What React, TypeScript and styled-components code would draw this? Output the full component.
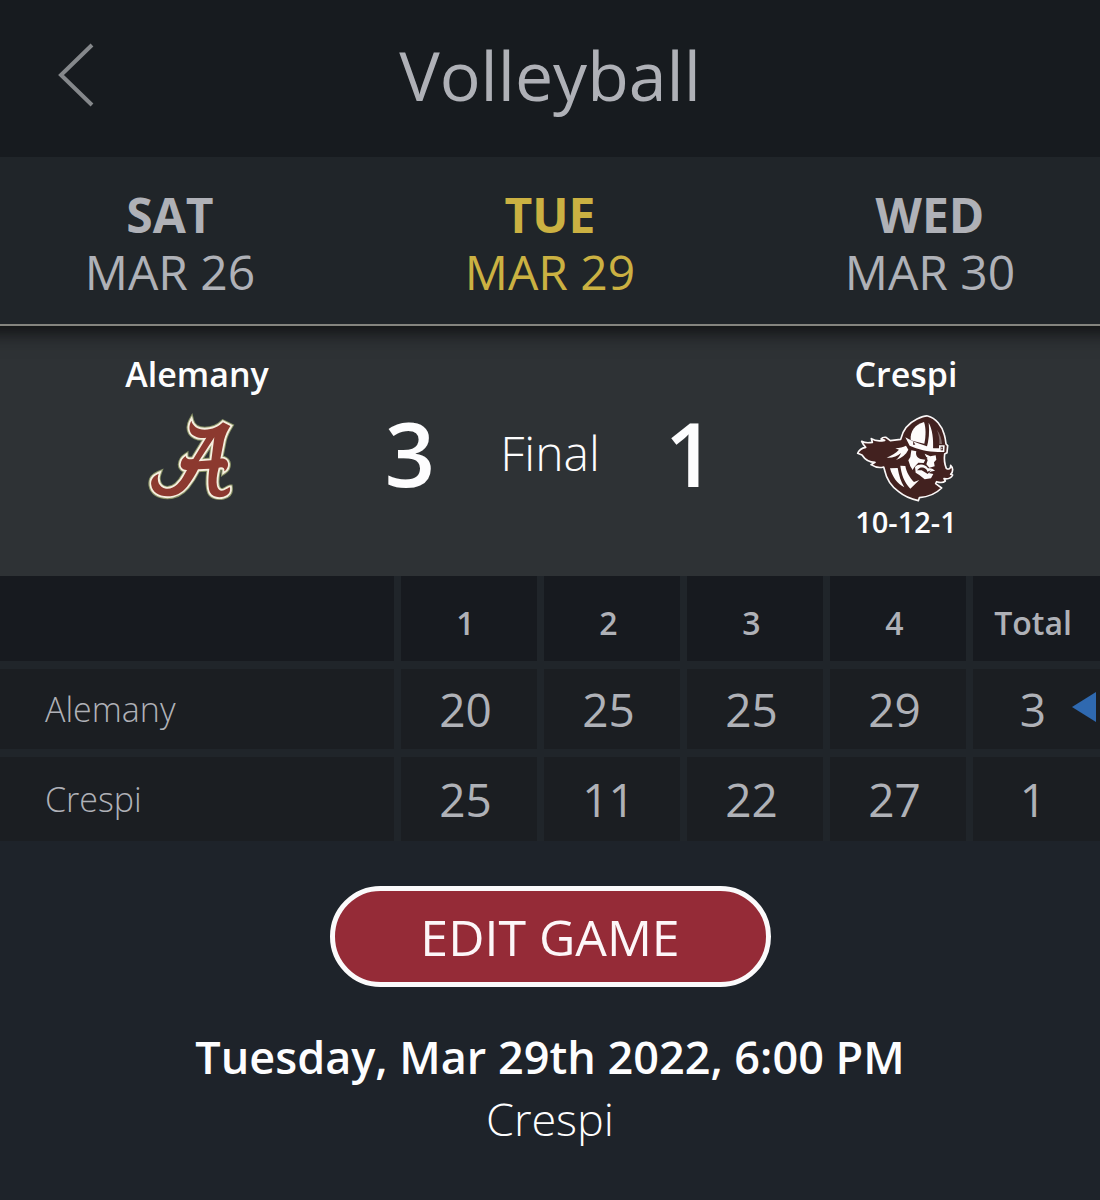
import React from 'react';
import styled, { createGlobalStyle } from 'styled-components';

const GlobalStyle = createGlobalStyle`
  *, *::before, *::after { box-sizing: border-box; }
  body {
    margin: 0;
    background: #1e232a;
    color: #fdfdfe;
    font-family: 'Open Sans', 'Noto Sans', sans-serif;
  }
`;

const Page = styled.div`
  min-height: 100vh;
  overflow-x: hidden;
`;

const Header = styled.header`
  display: grid;
  grid-template-columns: 152px 1fr 152px;
  align-items: center;
  position: relative;
  z-index: 1;
  height: 157px;
  padding-bottom: 7px;
  background: #171b1f;
`;

const BackButton = styled.button`
  display: flex;
  align-items: center;
  justify-content: center;
  height: 100px;
  padding: 0;
  border: 0;
  background: none;
  color: #85888b;
  cursor: pointer;
`;

const Title = styled.h1`
  margin: 0;
  color: #afb1b7;
  font-size: 68px;
  font-weight: 400;
  line-height: 100px;
  text-align: center;
`;

const DateTabs = styled.nav`
  display: grid;
  grid-template-columns: repeat(3, 1fr);
  position: relative;
  padding: 29px 0 24px;
  margin: 0 -20px;
  border-bottom: 2px solid #84847e;
  background: #202529;
  box-shadow: 0 4px 18px 2px #0e0f10;
`;

const DateTab = styled.button<{ $active: boolean }>`
  display: flex;
  flex-direction: column;
  align-items: center;
  padding: 0;
  border: 0;
  background: none;
  color: ${({ $active }) => ($active ? '#cbb142' : '#afb1b7')};
  font-family: inherit;
  font-size: 48px;
  line-height: 57px;
  cursor: pointer;
`;

const Weekday = styled.span`
  font-weight: 700;
`;

const DayLabel = styled.span`
  font-weight: 400;
`;

const Matchup = styled.section`
  display: grid;
  grid-template-columns: 1fr 420px 1fr;
  padding: 24px 0 34px;
  background: #2e3235;
`;

const Team = styled.div<{ $side: 'home' | 'away' }>`
  display: flex;
  flex-direction: column;
  align-items: center;
  padding: ${({ $side }) => ($side === 'away' ? '0 0 0 54px' : '0 48px 0 0')};
`;

const TeamName = styled.h2`
  margin: 0 0 14px;
  font-size: 34px;
  font-weight: 600;
  line-height: 48px;
`;

const TeamLogo = styled.svg`
  display: block;
  width: 100px;
  height: 90px;
`;

const Record = styled.p`
  margin: 0;
  font-size: 29px;
  font-weight: 600;
  line-height: 40px;
`;

const Result = styled.div`
  display: grid;
  grid-template-columns: repeat(3, 1fr);
  align-items: center;
  padding-top: 14px;
  text-align: center;
`;

const Score = styled.strong`
  font-size: 88px;
  font-weight: 600;
  line-height: 100px;
`;

const Status = styled.span`
  font-size: 48px;
  font-weight: 300;
  line-height: 60px;
`;

const ScoreTable = styled.table`
  width: 100%;
  border-spacing: 0;
  table-layout: fixed;
  background: #20252a;
  color: #afb1b7;
`;

const TeamCol = styled.col``;

const SetCol = styled.col`
  width: 143px;
`;

const TotalCol = styled.col`
  width: 134px;
`;

const HeadCell = styled.th`
  height: 93px;
  padding: 0;
  background: #171a1f;
  box-shadow: inset 7px -8px 0 #20252a;
  font-size: 32px;
  font-weight: 600;

  &:first-child { box-shadow: inset 0 -8px 0 #20252a; }
`;

const RowLabel = styled.th`
  padding: 0 0 0 45px;
  background: #1b1e22;
  background-clip: padding-box;
  font-size: 34px;
  font-weight: 300;
  text-align: left;
`;

const SetCell = styled.td`
  position: relative;
  padding: 0;
  background: #1b1e22;
  background-clip: padding-box;
  box-shadow: inset 7px 0 0 #20252a;
  font-size: 46px;
  font-weight: 400;
  line-height: 62px;
  text-align: center;
`;

const ScoreRow = styled.tr`
  height: 84px;

  &:not(:last-child) {
    height: 88px;
  }

  &:not(:last-child) > * {
    border-bottom: 8px solid #20252a;
  }
`;

const WinnerMark = styled.svg`
  position: absolute;
  top: 23px;
  right: 4px;
  width: 24px;
  height: 30px;
`;

const Details = styled.section`
  display: flex;
  flex-direction: column;
  align-items: center;
  padding: 45px 24px;
`;

const EditButton = styled.button`
  width: 441px;
  max-width: 100%;
  height: 101px;
  margin-bottom: 39px;
  padding: 0;
  border: 5px solid #fbfafb;
  border-radius: 51px;
  background: #952b37;
  color: #fdf6f8;
  font-family: inherit;
  font-size: 50px;
  font-weight: 400;
  line-height: 62px;
  cursor: pointer;
`;

const StartTime = styled.time`
  font-size: 45px;
  font-weight: 600;
  line-height: 62px;
  text-align: center;
`;

const Venue = styled.p`
  margin: 0;
  font-size: 45px;
  font-weight: 300;
  line-height: 62px;
`;

const dates = [
  { weekday: 'SAT', day: 'MAR 26' },
  { weekday: 'TUE', day: 'MAR 29' },
  { weekday: 'WED', day: 'MAR 30' },
];

const rows = [
  { team: 'Alemany', sets: [20, 25, 25, 29], total: 3 },
  { team: 'Crespi', sets: [25, 11, 22, 27], total: 1 },
];

const ALEMANY_SHAPE =
  'M184 62 C188 78 202 88 224 89 C248 89 266 80 279 67 L301 78 C293 91 286 104 282 120 L271 176 C282 174 293 180 294 191 C295 201 289 210 283 214 C284 205 281 202 273 202 L266 203 C260 226 258 244 261 258 C264 270 272 275 282 271 C290 268 296 262 300 262 C302 276 296 286 280 290 C264 294 247 290 240 277 C234 264 234 236 238 206 L204 208 C196 224 185 243 171 260 C155 279 137 289 112 289 C86 289 67 276 64 256 C61 240 70 228 86 221 C79 240 86 262 108 266 C132 269 150 249 164 223 L171 210 C160 211 151 203 152 193 C153 182 158 174 167 168 C167 175 173 178 184 178 L190 177 L229 113 C208 116 190 110 182 98 C176 87 178 73 184 62 Z M253 112 L206 184 L244 181 Z';

function AlemanyLogo() {
  return (
    <TeamLogo viewBox="51 36 300 270" role="img" aria-label="Alemany logo">
      <g strokeLinejoin="miter" fillRule="evenodd">
        <path d={ALEMANY_SHAPE} fill="none" stroke="#8a9468" strokeWidth="17" />
        <path d={ALEMANY_SHAPE} fill="#f6efdf" stroke="#f6efdf" strokeWidth="11" />
        <path d={ALEMANY_SHAPE} fill="#8c392f" />
      </g>
    </TeamLogo>
  );
}

function CrespiLogo() {
  return (
    <TeamLogo viewBox="33 36 300 270" role="img" aria-label="Crespi logo">
      <path
        d="M167 118 C173 91 191 69 216 57 C229 51 240 47 248 48 C272 54 291 77 298 104 C301 114 302 124 303 132 L308 137 L306 158 L299 162 C297 177 299 193 304 205 C311 210 318 205 317 196 C325 203 325 215 317 223 L323 225 C319 233 310 238 297 236 L301 243 C294 249 284 248 275 245 L272 251 L290 264 C274 280 248 291 223 293 L220 302 C201 298 178 289 161 275 C139 259 124 235 119 211 L116 201 C102 205 89 201 78 194 L90 187 C74 187 60 179 51 165 L38 160 C42 149 51 144 62 142 C57 136 53 131 50 124 C61 130 71 129 82 127 L79 116 C92 125 105 124 119 121 L108 117 C112 112 116 111 123 112 L136 122 Z"
        fill="#42211f"
        stroke="#fbf8f8"
        strokeWidth="5"
        strokeLinejoin="round"
      />
      <g fill="#fdfbfb">
        {/* helmet panels and brim */}
        <path d="M197 121 C195 94 209 74 237 66 C243 83 243 107 238 131 L225 128 Z" />
        <path d="M251 68 C262 88 266 116 264 151 L244 147 C252 121 254 95 251 68 Z" />
        <path d="M181 112 L202 123 C227 132 243 139 266 145 L282 145 L282 136 L299 136 L298 156 L279 156 C249 155 218 148 194 137 Z" />
        <path d="M276 90 C286 103 290 118 291 132 L283 132 C284 117 281 103 276 90 Z" opacity="0.35" />
        {/* swept hair highlights */}
        <path d="M183 137 C174 141 164 144 151 145 L162 149 C152 160 140 166 125 173 C143 174 157 169 168 159 C165 167 160 174 153 180 C170 174 183 164 190 149 Z" />
        {/* face */}
        <path d="M199 151 L214 154 C211 164 216 174 227 177 L241 179 L236 189 L220 188 C213 196 207 200 203 210 L196 199 L190 181 L196 171 Z" />
        <path d="M239 161 L256 169 L272 166 L274 179 L267 187 L269 199 L253 203 L244 193 L248 181 Z" />
        <path d="M210 201 C222 190 240 192 249 205 C257 203 266 206 270 213 C263 212 257 214 250 219 L265 222 L258 235 L239 238 L223 225 L212 218 Z" />
        {/* collar and cloak stripes */}
        <path d="M135 205 L158 204 C162 226 167 244 178 262 C157 251 142 231 135 205 Z" />
        <path d="M166 197 L181 198 C184 216 195 234 207 246 L223 240 L196 266 C178 247 169 223 166 197 Z" />
      </g>
      <g fill="#42211f">
        <path d="M216 160 L237 166 L249 175 L231 173 Z" />
        <path d="M224 204 C235 200 246 207 247 215 L258 211 L248 222 L230 211 L216 211 Z" />
        <rect x="287" y="140" width="7" height="11" />
        <rect x="289" y="143" width="3" height="5" fill="#fdfbfb" />
        <path d="M205 124 L211 134 L204 134 Z" />
      </g>
    </TeamLogo>
  );
}

export default function App() {
  return (
    <Page>
      <GlobalStyle />
      <Header>
        <BackButton type="button" aria-label="Back">
          <svg width="36" height="64" viewBox="0 0 36 64" fill="none" stroke="currentColor" strokeWidth="4">
            <path d="M34 2 L3 32 L34 62" />
          </svg>
        </BackButton>
        <Title>Volleyball</Title>
      </Header>

      <DateTabs aria-label="Game dates">
        {dates.map(({ weekday, day }) => (
          <DateTab key={day} type="button" $active={weekday === 'TUE'}>
            <Weekday>{weekday}</Weekday>
            <DayLabel>{day}</DayLabel>
          </DateTab>
        ))}
      </DateTabs>

      <Matchup>
        <Team $side="away">
          <TeamName>Alemany</TeamName>
          <AlemanyLogo />
        </Team>
        <Result>
          <Score>3</Score>
          <Status>Final</Status>
          <Score>1</Score>
        </Result>
        <Team $side="home">
          <TeamName>Crespi</TeamName>
          <CrespiLogo />
          <Record>10-12-1</Record>
        </Team>
      </Matchup>

      <ScoreTable>
        <colgroup>
          <TeamCol />
          <SetCol span={4} />
          <TotalCol />
        </colgroup>
        <thead>
          <tr>
            <HeadCell aria-label="Team" />
            {[1, 2, 3, 4].map((set) => (
              <HeadCell key={set} scope="col">{set}</HeadCell>
            ))}
            <HeadCell scope="col">Total</HeadCell>
          </tr>
        </thead>
        <tbody>
          {rows.map(({ team, sets, total }) => (
            <ScoreRow key={team}>
              <RowLabel scope="row">{team}</RowLabel>
              {sets.map((points, i) => (
                <SetCell key={i}>{points}</SetCell>
              ))}
              <SetCell>
                {total}
                {total === 3 && (
                  <WinnerMark viewBox="0 0 24 30" role="img" aria-label="Winner">
                    <path d="M0 15 L24 0 V30 Z" fill="#2f69b0" />
                  </WinnerMark>
                )}
              </SetCell>
            </ScoreRow>
          ))}
        </tbody>
      </ScoreTable>

      <Details>
        <EditButton type="button">EDIT GAME</EditButton>
        <StartTime dateTime="2022-03-29T18:00">Tuesday, Mar 29th 2022, 6:00 PM</StartTime>
        <Venue>Crespi</Venue>
      </Details>
    </Page>
  );
}
